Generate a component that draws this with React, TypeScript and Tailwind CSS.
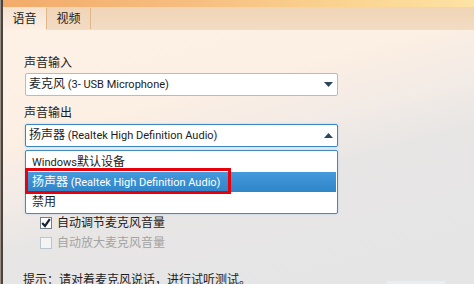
import React from "react";

function Arrow({ up }: { up?: boolean }) {
  return (
    <svg width="9" height="5" viewBox="0 0 9 5" className="block shrink-0">
      {up ? (
        <polygon points="0,5 9,5 4.5,0" fill="#2b4760" />
      ) : (
        <polygon points="0,0 9,0 4.5,5" fill="#2b4760" />
      )}
    </svg>
  );
}

function L({ children }: { children: React.ReactNode }) {
  return <span className="text-[11px]">{children}</span>;
}

export default function App() {
  return (
    <div className="w-[474px] h-[284px] overflow-hidden flex font-['Roboto','Noto_Sans_CJK_SC',sans-serif] text-[12px] text-[#1c1c1c]">
      <div className="w-[1px] shrink-0 bg-[#9c8f85]" />
      <div className="w-[2px] shrink-0 bg-[#4a4440]" />
      <div className="flex-1 flex flex-col min-h-0">
        {/* top strip */}
        <div className="h-[7px] shrink-0 bg-[linear-gradient(90deg,#f2ab6a_0%,#f6be80_40%,#fbd592_75%,#fde3a4_100%)]" />
        {/* tab bar */}
        <div className="h-[23px] shrink-0 flex bg-[linear-gradient(180deg,#f0d4b6_0%,#f2dcc4_100%)]">
          <div className="w-[43px] flex items-center justify-center bg-[linear-gradient(180deg,#f5e2cf_0%,#fcefe3_100%)] leading-[16px]">
            语音
          </div>
          <div className="w-[1px] my-[1px] bg-[#e2b48a]" />
          <div className="w-[43px] flex items-center justify-center leading-[16px]">视频</div>
          <div className="w-[1px] my-[1px] bg-[#e2b48a]" />
        </div>
        {/* content */}
        <div className="flex-1 min-h-0 overflow-hidden flex flex-col pl-[22px] pt-[25px] bg-[linear-gradient(165deg,#fdf1e6_0%,#fcefe3_30%,#f3ebe6_45%,#e8e6e5_58%,#e5e5e5_100%)]">
          <div className="shrink-0 h-[16px] leading-[16px] -ml-[1px]">声音输入</div>
          <div className="shrink-0 mt-[2px] w-[313px] h-[23px] bg-white border border-[#b3bcc6] rounded-[2px] flex items-center pl-[3px] pr-[4px]">
            <span className="flex-1 leading-[16px]">
              麦克风<L> (3- USB Microphone)</L>
            </span>
            <Arrow />
          </div>
          <div className="shrink-0 mt-[9px] h-[16px] leading-[16px] -ml-[1px]">声音输出</div>
          <div className="shrink-0 relative mt-[3px] w-[313px]">
            <div className="h-[23px] bg-white border border-[#3a87c3] rounded-[2px] shadow-[0_0_2px_#a6cdee] flex items-center pl-[3px] pr-[4px]">
              <span className="flex-1 leading-[16px]">
                扬声器<L> (Realtek High Definition Audio)</L>
              </span>
              <Arrow up />
            </div>
            {/* dropdown list */}
            <div className="absolute left-0 top-[26px] w-[313px] h-[64px] bg-white border border-[#3f8bc6] rounded-[2px] shadow-[0_0_2px_#a6cdee] p-[1px] flex flex-col z-10">
              <div className="h-[20px] flex items-center pl-[5px] leading-[16px]">
                <span>
                  <L>Windows</L>默认设备
                </span>
              </div>
              <div className="h-[20px] flex items-center pl-[5px] leading-[16px] text-white bg-[linear-gradient(180deg,#449adc_0%,#3a8fd3_50%,#2e85c7_100%)]">
                <span>
                  扬声器<L> (Realtek High Definition Audio)</L>
                </span>
              </div>
              <div className="h-[20px] flex items-center pl-[5px] leading-[16px]">禁用</div>
            </div>
            {/* red highlight frame */}
            <div className="absolute left-0 top-[44px] w-[206px] h-[26px] border-[3px] border-[#e8000b] z-20" />
          </div>
          {/* checkboxes */}
          <div className="shrink-0 mt-[68px] ml-[15px] h-[16px] flex items-center">
            <div className="w-[12px] h-[12px] bg-white border border-[#6f7f8e] flex items-center justify-center">
              <svg width="10" height="10" viewBox="0 0 10 10">
                <polyline points="1.2,5 4,8 8.8,1.2" fill="none" stroke="#172333" strokeWidth="2.2" />
              </svg>
            </div>
            <span className="ml-[5px] leading-[16px]">自动调节麦克风音量</span>
          </div>
          <div className="shrink-0 mt-[4px] ml-[15px] h-[16px] flex items-center">
            <div className="w-[12px] h-[12px] bg-[#f4f4f4] border border-[#b9c5d0]" />
            <span className="ml-[5px] leading-[16px] text-[#a3a3a3]">自动放大麦克风音量</span>
          </div>
          {/* tip row */}
          <div className="shrink-0 mt-[21px] flex items-start">
            <span className="-ml-[2px] leading-[16px]">提示：请对着麦克风说话，进行试听测试。</span>
            <div className="ml-auto mr-[29px] mt-[9px] flex">
              <div className="w-[22px] overflow-hidden leading-[16px] text-[11px]">Audio</div>
              <div className="w-[58px] h-[16px] bg-[#e9eef3]" />
            </div>
          </div>
        </div>
      </div>
    </div>
  );
}
